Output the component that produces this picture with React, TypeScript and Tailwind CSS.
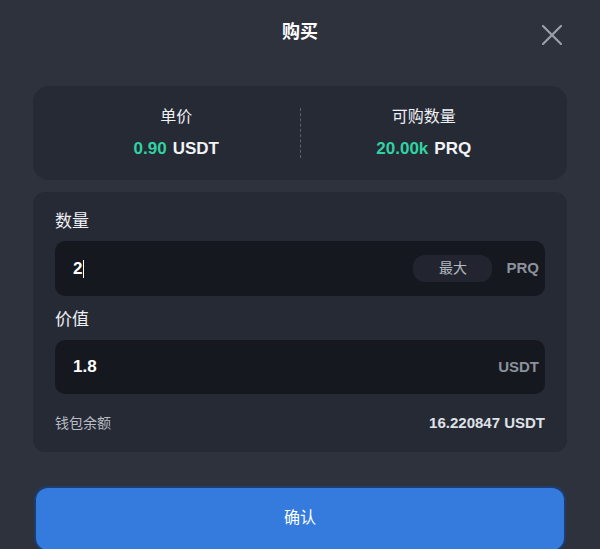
import React from "react";

const font = { fontFamily: '"Liberation Sans", "Noto Sans CJK SC", sans-serif' };

export default function App() {
  return (
    <div
      className="w-[600px] h-[549px] overflow-hidden bg-[#2e323d] text-white"
      style={font}
    >
      {/* header */}
      <div className="relative h-[86px] flex justify-center pt-[20px]">
        <div className="text-[18px] font-bold leading-[24px]">购买</div>
        <button className="absolute right-[38px] top-[25px] text-[#9aa0ab]">
          <svg width="20" height="20" viewBox="0 0 20 20" fill="none">
            <path d="M1 1L19 19M19 1L1 19" stroke="currentColor" strokeWidth="2.2" strokeLinecap="round" />
          </svg>
        </button>
      </div>

      <div className="px-[33px] flex flex-col">
        {/* info card */}
        <div className="h-[94px] rounded-[16px] bg-[#262a35] flex items-center px-[20px]">
          <div className="flex-1 flex flex-col items-center gap-[12px]">
            <div className="text-[16px] leading-[20px] text-[#eef0f4]">单价</div>
            <div className="text-[17px] leading-[20px] font-bold">
              <span className="text-[#2fd3a2]">0.90</span>
              <span className="ml-[6px] text-[#f2f3f5]">USDT</span>
            </div>
          </div>
          <div className="h-[50px] border-l border-dashed border-[#5b6170]" />
          <div className="flex-1 flex flex-col items-center gap-[12px]">
            <div className="text-[16px] leading-[20px] text-[#eef0f4]">可购数量</div>
            <div className="text-[17px] leading-[20px] font-bold">
              <span className="text-[#2fd3a2]">20.00k</span>
              <span className="ml-[6px] text-[#f2f3f5]">PRQ</span>
            </div>
          </div>
        </div>

        {/* form card */}
        <div className="mt-[12px] h-[260px] rounded-[12px] bg-[#262a35] px-[22px] pt-[18px]">
          <div className="text-[17px] leading-[24px] text-[#eef0f4]">数量</div>
          <div className="mt-[7px] h-[55px] rounded-[10px] bg-[#15181f] flex items-center pl-[18px] pr-[6px]">
            <div className="flex-1 flex items-center text-[17px] font-bold">
              <span>2</span>
              <span className="w-[1px] h-[18px] bg-white ml-[1px]" />
            </div>
            <div className="w-[79px] h-[27px] rounded-[12px] bg-[#22252f] flex items-center justify-center text-[14px] text-[#b4b8c0]">
              最大
            </div>
            <div className="ml-[14px] text-[15px] font-bold text-[#8c919b]">PRQ</div>
          </div>

          <div className="mt-[12px] text-[17px] leading-[24px] text-[#eef0f4]">价值</div>
          <div className="mt-[8px] h-[54px] rounded-[10px] bg-[#15181f] flex items-center pl-[18px] pr-[6px]">
            <div className="flex-1 text-[17px] font-bold">1.8</div>
            <div className="text-[15px] font-bold text-[#8c919b]">USDT</div>
          </div>

          <div className="mt-[19px] flex items-center justify-between text-[14px] leading-[20px]">
            <span className="text-[#b9bdc5]">钱包余额</span>
            <span className="text-[15px] text-[#dfe1e6] font-bold">16.220847 USDT</span>
          </div>
        </div>

        {/* confirm */}
        <button className="mt-[34px] mx-[1px] h-[66px] rounded-[14px] bg-[#347bdd] border-2 border-[#1d3c70] flex items-center justify-center text-[16px] text-white">
          <span className="-mt-[3px]">确认</span>
        </button>
      </div>
    </div>
  );
}
